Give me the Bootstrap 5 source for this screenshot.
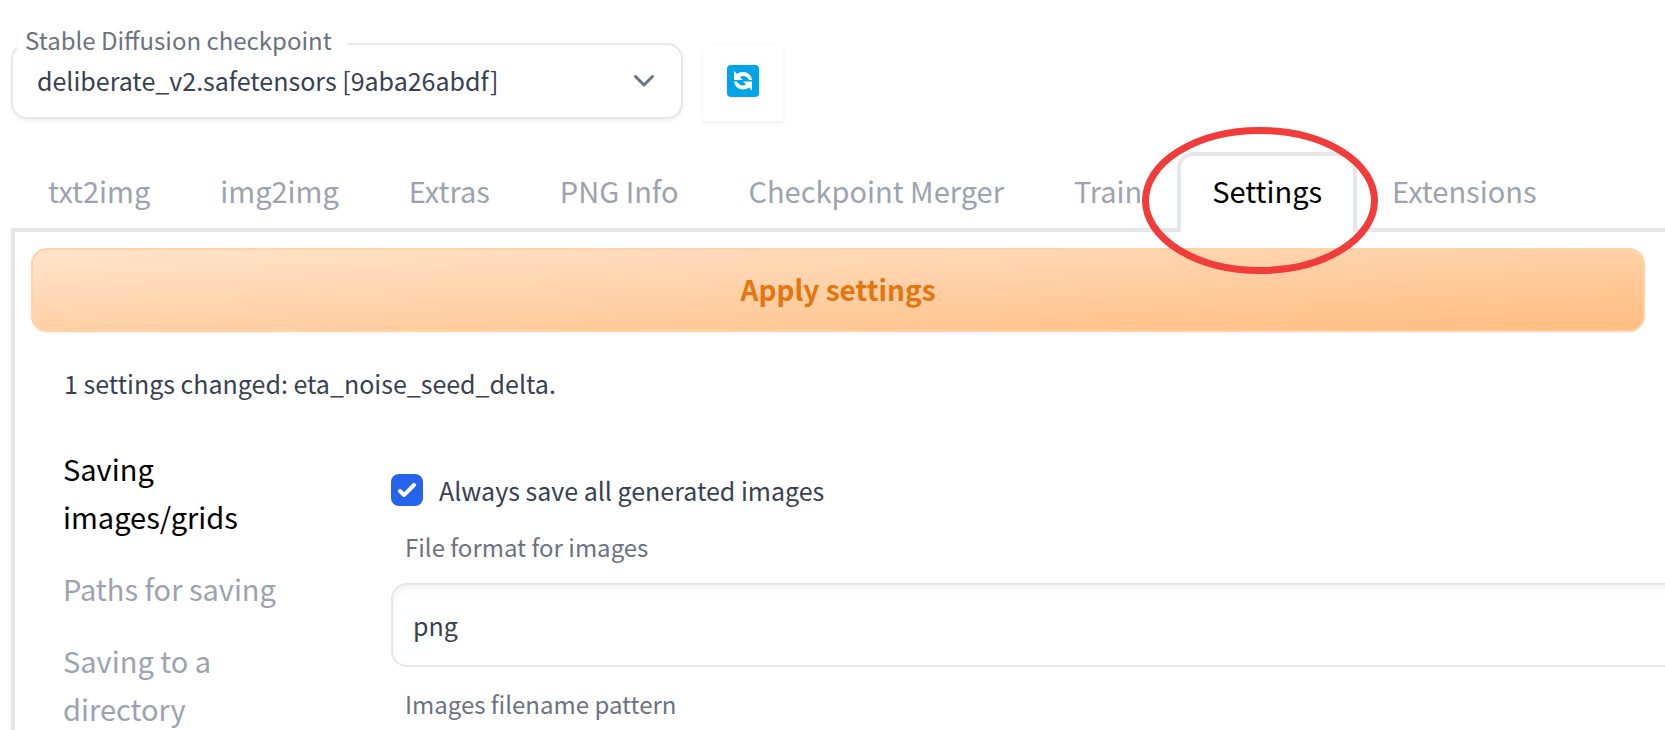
<!DOCTYPE html>
<html lang="en">
<head>
<meta charset="utf-8">
<meta name="viewport" content="width=device-width, initial-scale=1">
<title>Stable Diffusion</title>
<link href="https://cdn.jsdelivr.net/npm/bootstrap@5.3.0/dist/css/bootstrap.min.css" rel="stylesheet">
<style>
  :root { --line: #e5e7eb; --ink: #374151; --soft: #6b7280; --faint: #9ca3af; }
  body {
    font-family: "Noto Sans CJK SC", "Noto Sans", sans-serif;
    font-size: 25px; line-height: 40px; color: var(--ink); background: #fff;
  }
  .page { height: 100vh; overflow: hidden; padding: 43px 0 0 11px; }

  /* checkpoint picker */
  .checkpoint { width: 672px; }
  .checkpoint label {
    position: absolute; top: -23px; left: 6px; padding: 0 16px 0 8px;
    font-size: 24px; color: var(--soft); background: #fff; border-radius: 8px; z-index: 1;
  }
  .checkpoint .form-select {
    height: 76px; padding: 0 64px 2px 24px; font-size: 25px; line-height: 40px; color: var(--ink);
    border: 2px solid var(--line); border-radius: 16px; background-image: none;
    box-shadow: 0 2px 4px rgba(0, 0, 0, .06);
  }
  .checkpoint svg { position: absolute; right: 27px; top: 30px; pointer-events: none; }
  .refresh { width: 80px; height: 76px; margin: 2px 0 0 20px; box-shadow: 0 2px 4px rgba(0, 0, 0, .07); border: 0; border-radius: 2px; }
  .refresh svg { margin-bottom: 4px; }

  /* main tabs */
  .main-tabs { margin-top: 31px; padding-left: 2px; flex-wrap: nowrap; border-bottom: 4px solid var(--line); }
  .main-tabs .nav-item { margin-bottom: -4px; }
  .main-tabs .nav-link {
    margin: 0; padding: 10px 31px 14px; border: 4px solid transparent; border-radius: 16px 16px 0 0;
    font-size: 29px; line-height: 48px; color: var(--faint); white-space: nowrap;
  }
  .main-tabs .nav-link.active { color: #000; background: #fff; border-color: var(--line); border-bottom: 0; padding-bottom: 18px; }
  .marker { position: absolute; left: -35px; top: -25px; z-index: 3; pointer-events: none; }

  /* settings panel */
  .panel { border-left: 4px solid var(--line); padding: 16px 20px 0 16px; }
  .apply {
    height: 84px; border: 2px solid #fed3a6; border-radius: 16px; padding: 0 0 2px;
    background: linear-gradient(to bottom right, #ffe4cc, #ffbc80) border-box;
    color: #e5750f; font-size: 28px; line-height: 48px; font-weight: 600;
    box-shadow: 0 1px 3px rgba(0, 0, 0, .06);
  }
  .message { margin: 31px 0 0 33px; }
  .sections { margin-top: 29px; }
  .side-tabs { width: 264px; flex: none; padding-left: 32px; }
  .side-tabs .nav-link { padding: 12px 0; font-size: 29px; line-height: 48px; color: var(--faint); text-align: left; }
  .side-tabs .nav-link.active { color: #000; }
  .side-tabs span { display: block; width: 230px; }
  .options { margin: 38px -60px 0 96px; }
  .options .form-check { min-height: 0; padding: 0; gap: 16px; }
  .options .form-check-input {
    width: 32px; height: 32px; margin: 0; border: 0; border-radius: 8px; float: none;
  }
  .options .form-check-input:checked {
    background: #2563eb url("data:image/svg+xml,%3Csvg xmlns='http://www.w3.org/2000/svg' viewBox='0 0 16 16' fill='white'%3E%3Cpath d='M12.207 4.793a1 1 0 010 1.414l-5 5a1 1 0 01-1.414 0l-2-2a1 1 0 011.414-1.414L6.5 9.086l4.293-4.293a1 1 0 011.414 0z'/%3E%3C/svg%3E") center / 100% no-repeat;
  }
  .field-name { display: block; margin: 17px 0 16px 14px; font-size: 24px; color: var(--soft); }
  .options .form-control {
    height: 84px; padding: 0 20px; font-size: 25px; line-height: 40px; color: var(--ink);
    border: 2px solid var(--line); border-radius: 16px; box-shadow: inset 0 4px 8px rgba(0, 0, 0, .05);
  }
</style>
</head>
<body>
<div class="page">
  <header class="d-flex align-items-start">
    <div class="checkpoint position-relative">
      <label for="checkpoint">Stable Diffusion checkpoint</label>
      <select class="form-select" id="checkpoint">
        <option>deliberate_v2.safetensors [9aba26abdf]</option>
      </select>
      <svg width="24" height="16" viewBox="0 0 24 16" fill="none" stroke="#6b7280" stroke-width="3" stroke-linecap="round" stroke-linejoin="round" aria-hidden="true"><path d="M3.500 3.500 12 12l8.500-8.500"/></svg>
    </div>
    <button class="btn refresh d-flex align-items-center justify-content-center p-0 bg-white" type="button" aria-label="Refresh">
      <svg width="32" height="32" viewBox="0 0 32 32" aria-hidden="true">
        <rect width="32" height="32" rx="4" fill="#00a4e8"/>
        <path fill="#fff" d="M7 6v9h9l-3-3c3-2 7-1 9 3h3C24 7 15 5 10 9ZM25 25.500v-9h-9l3 3c-3 2-7 1-9-3H7c1 8 10 10 15 6Z"/>
      </svg>
    </button>
  </header>

  <ul class="nav nav-tabs main-tabs">
    <li class="nav-item"><button class="nav-link" type="button">txt2img</button></li>
    <li class="nav-item"><button class="nav-link" type="button">img2img</button></li>
    <li class="nav-item"><button class="nav-link" type="button">Extras</button></li>
    <li class="nav-item"><button class="nav-link" type="button">PNG Info</button></li>
    <li class="nav-item"><button class="nav-link" type="button">Checkpoint Merger</button></li>
    <li class="nav-item"><button class="nav-link" type="button">Train</button></li>
    <li class="nav-item position-relative">
      <button class="nav-link active" type="button">Settings</button>
      <svg class="marker" width="236" height="147" viewBox="0 0 236 147" fill="none" aria-hidden="true"><ellipse cx="118" cy="73.500" rx="114.500" ry="70" stroke="#f23b3b" stroke-width="7"/></svg>
    </li>
    <li class="nav-item"><button class="nav-link" type="button">Extensions</button></li>
  </ul>

  <main class="panel">
    <button class="btn apply w-100 d-block" type="button">Apply settings</button>
    <p class="message">1 settings changed: eta_noise_seed_delta.</p>
    <div class="sections d-flex">
      <nav class="nav flex-column side-tabs" aria-label="Settings sections">
        <button class="nav-link active border-0 bg-transparent" type="button"><span>Saving images/grids</span></button>
        <button class="nav-link border-0 bg-transparent" type="button"><span>Paths for saving</span></button>
        <button class="nav-link border-0 bg-transparent" type="button"><span>Saving to a directory</span></button>
      </nav>
      <form class="options flex-fill">
        <div class="form-check d-flex align-items-center">
          <input class="form-check-input" type="checkbox" id="save-all" checked>
          <label class="form-check-label" for="save-all">Always save all generated images</label>
        </div>
        <label class="field-name" for="format">File format for images</label>
        <input class="form-control" type="text" id="format" value="png">
        <label class="field-name" for="pattern">Images filename pattern</label>
      </form>
    </div>
  </main>
</div>
<script src="https://cdn.jsdelivr.net/npm/bootstrap@5.3.0/dist/js/bootstrap.bundle.min.js"></script>
</body>
</html>
